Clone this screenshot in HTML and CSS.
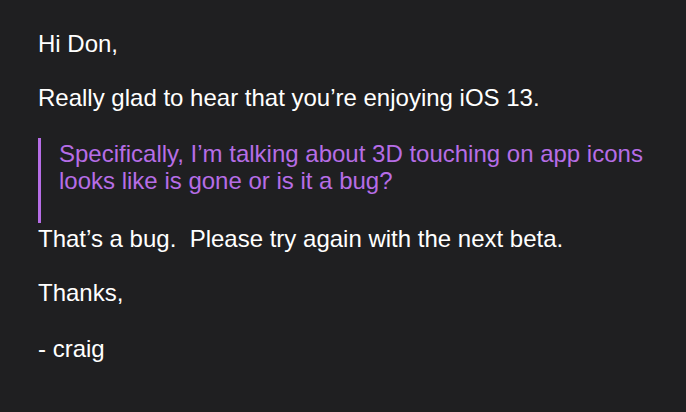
FILE: index.html
```html
<!DOCTYPE html>
<html lang="en">
  <head>
    <meta charset="UTF-8" />
    <title>Re: iOS 13</title>
    <link rel="stylesheet" href="styles.css">
  </head>
  <body>
    <div class="mail">
      <p>Hi Don,</p>
      <p>Really glad to hear that you’re enjoying iOS 13.</p>
      <blockquote class="quote">
        Specifically, I’m talking about 3D touching on app icons<br />
        looks like is gone or is it a bug?
      </blockquote>
      <p>That’s a bug.&nbsp; Please try again with the next beta.</p>
      <p>Thanks,</p>
      <p class="sign">- craig</p>
    </div>
  </body>
</html>
```

FILE: styles.css
```css
:root {
  --bg: #1f1f21;
  --text: #ffffff;
  --quote: #b66de6;
  --line: 27px;
}

html,
body {
  margin: 0;
  background: var(--bg);
}

.mail {
  padding: 30px 38px;
  color: var(--text);
  font-family: "Liberation Sans", Arial, sans-serif;
  font-size: 24px;
  line-height: var(--line);
}

.mail p {
  margin: 0 0 var(--line);
}

.quote {
  margin: 2px 0 2px;
  padding: 2px 0 29px 18px;
  border-left: 3px solid var(--quote);
  color: var(--quote);
}

.mail .sign {
  margin-top: 29px;
}
```
